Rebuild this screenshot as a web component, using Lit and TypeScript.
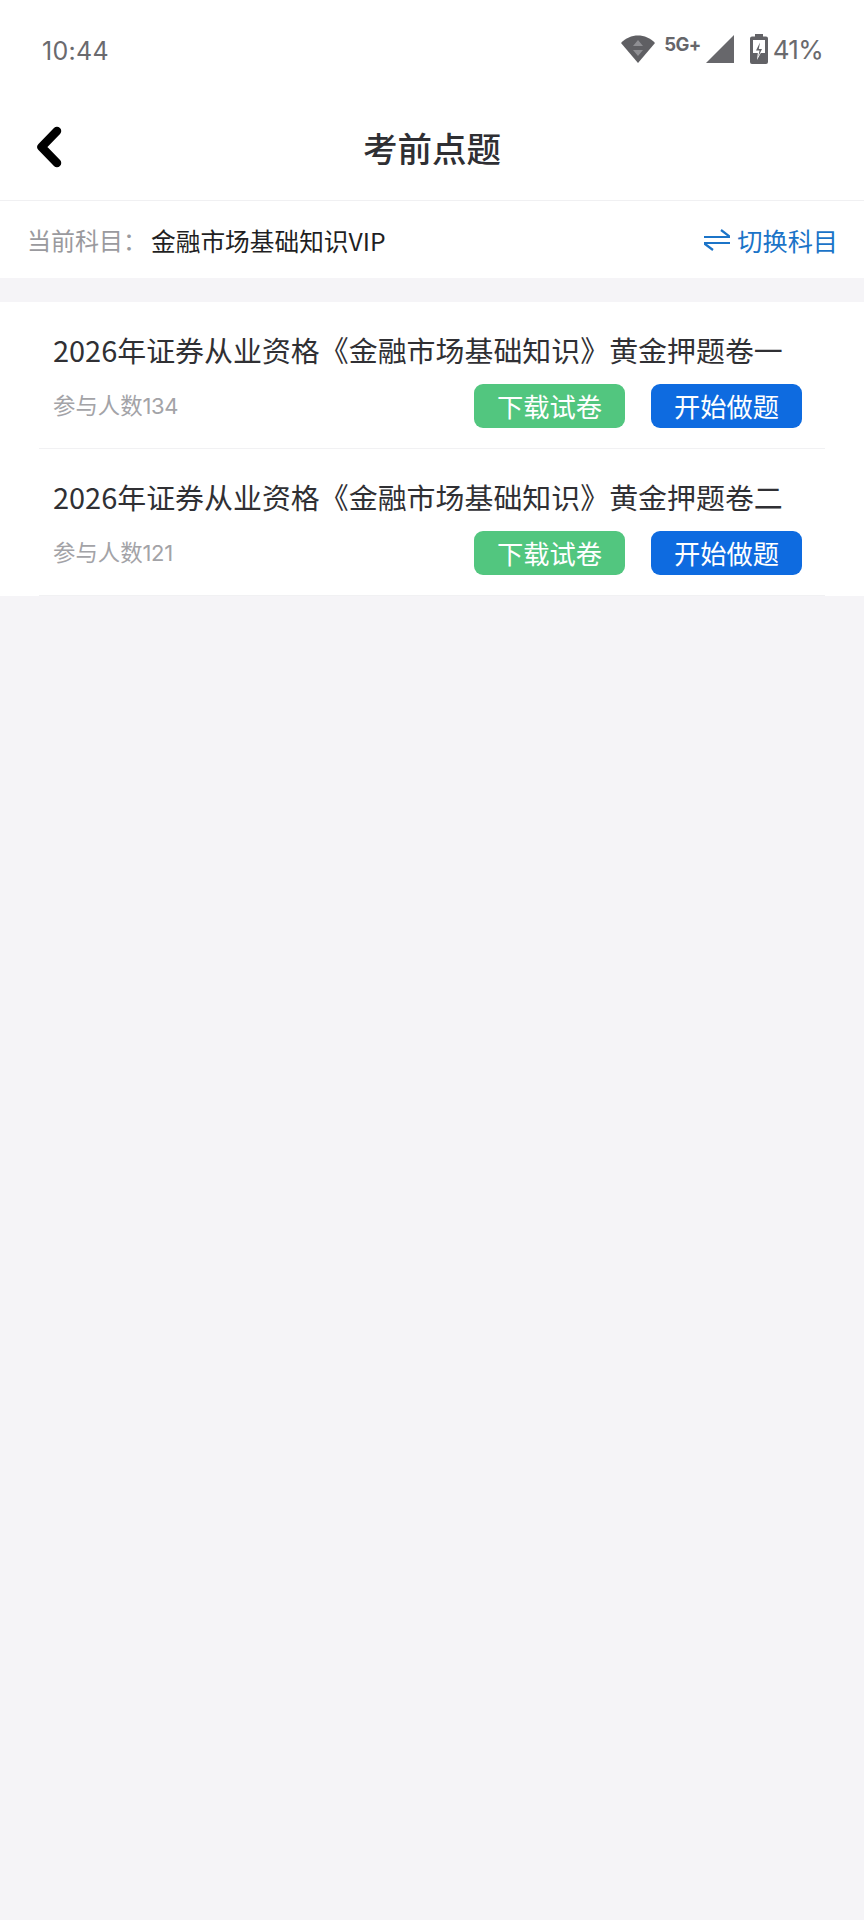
import { LitElement, html, css } from "lit";
import { customElement } from "lit/decorators.js";

const items = [
  { title: "2026年证券从业资格《金融市场基础知识》黄金押题卷一", count: 134 },
  { title: "2026年证券从业资格《金融市场基础知识》黄金押题卷二", count: 121 },
];

@customElement("app-root")
export class AppRoot extends LitElement {
  static styles = css`
    :host { display: block; width: 864px; height: 1920px; background: #f5f4f7; color: #2f2f33;
      font-family: "Noto Sans CJK SC", "Noto Sans", sans-serif; overflow: hidden; }
    .status { height: 88px; background: #fff; display: flex; align-items: center; padding: 0 42px; box-sizing: border-box; justify-content: space-between; }
    .time { font: 400 25px "Inter", sans-serif; color: #6a6a6e; letter-spacing: 0.3px; position: relative; top: 7px; }
    .icons { display: flex; align-items: center; position: relative; top: 5px; margin-right: -1px; color: #6a6a6e; }
    .net { font: 700 18.5px "Inter", sans-serif; color: #66666a; margin: -11px 5px 0 9px; letter-spacing: -0.6px; }
    .pct { font: 400 26px "Inter", sans-serif; color: #6a6a6e; margin-left: 5px; letter-spacing: -0.7px; }
    .bat { margin-left: 16px; }
    .nav { height: 112px; background: #fff; display: flex; align-items: center; justify-content: center; position: relative; border-bottom: 1px solid #f0f0f2; }
    .back { position: absolute; left: 36px; top: 38px; }
    .nav h1 { margin: 0; font-size: 34.5px; font-weight: 500; line-height: 1; color: #2f2f33; position: relative; top: 3px; }
    .subject { height: 77px; background: #fff; display: flex; align-items: center; padding: 0 26px 0 27px; }
    .lbl { font-size: 24px; color: #9a9a9e; width: 124px; flex: none; }
    .val { font-size: 24.7px; color: #1f1f23; flex: 1; }
    .switch { display: flex; align-items: center; gap: 7px; color: #1b74c8; font-size: 25.2px; }
    .list { margin-top: 24px; background: #fff; }
    .row { height: 147px; margin: 0 39px; box-sizing: border-box; border-bottom: 1px solid #f1f1f3; padding: 0 0 0 14px; }
    .title { font-size: 28.95px; line-height: 40px; padding-top: 27px; white-space: nowrap; color: #303034; }
    .meta { display: flex; align-items: center; margin-top: 15px; padding-right: 23px; }
    .count { flex: 1; font-size: 22.4px; color: #a3a3a7; position: relative; top: -2px; }
    .num { font-family: "Inter", sans-serif; font-size: 22px; letter-spacing: -0.4px; }
    .btn { width: 151px; height: 44px; border-radius: 9px; color: #fff; display: flex; align-items: center; justify-content: center; font-size: 26.3px; line-height: 1; }
    .green { background: #52c67f; margin-right: 26px; }
    .blue { background: #0e6be0; }
  `;

  render() {
    return html`
      <div class="status">
        <span class="time">10:44</span>
        <div class="icons">
          <svg width="34" height="30" viewBox="0 0 34 30">
            <path d="M0 9 C9 -1 25 -1 34 9 L17 29 Z" fill="#5f5f63"/>
            <path d="M17 6 L22 12 H12 Z M17 22 L12 16 H22 Z" fill="#8e8e92"/>
          </svg>
          <span class="net">5G+</span>
          <svg width="28" height="28" viewBox="0 0 28 28"><path d="M28 0 V28 H0 Z" fill="#67676b"/></svg>
          <svg class="bat" width="18" height="30" viewBox="0 0 18 30">
            <path d="M5 0 H13 V2.5 H16 Q18 2.5 18 4.5 V28 Q18 30 16 30 H2 Q0 30 0 28 V4.5 Q0 2.5 2 2.5 H5 Z" fill="#626266"/>
            <path d="M3 6 H15 V19 H3 Z" fill="#fff"/>
            <path d="M10.5 6 L4.5 17.5 H8 L7 26 L13.5 14 H10 Z" fill="#fff"/>
            <path d="M10 8.5 L6 16.5 H9.5 L8.3 22.5 L12 15 H8.8 Z" fill="#626266"/>
          </svg>
          <span class="pct">41%</span>
        </div>
      </div>
      <div class="nav">
        <svg class="back" width="26" height="42" viewBox="0 0 26 42">
          <path d="M21 5 L5.5 21 L21 37" fill="none" stroke="#000" stroke-width="8.5" stroke-linecap="round" stroke-linejoin="round"/>
        </svg>
        <h1>考前点题</h1>
      </div>
      <div class="subject">
        <span class="lbl">当前科目：</span>
        <span class="val">金融市场基础知识VIP</span>
        <span class="switch">
          <svg width="26" height="26" viewBox="0 0 26 26" fill="none" stroke="#1b74c8" stroke-width="2.2">
            <path d="M0 10 H25 V9 L17 3"/><path d="M26 16 H1 V17 L9 23"/>
          </svg>切换科目</span>
      </div>
      <div class="list">
        ${items.map(
          (i) => html`<div class="row">
            <div class="title">${i.title}</div>
            <div class="meta">
              <span class="count">参与人数<span class="num">${i.count}</span></span>
              <div class="btn green">下载试卷</div>
              <div class="btn blue">开始做题</div>
            </div>
          </div>`
        )}
      </div>
    `;
  }
}
